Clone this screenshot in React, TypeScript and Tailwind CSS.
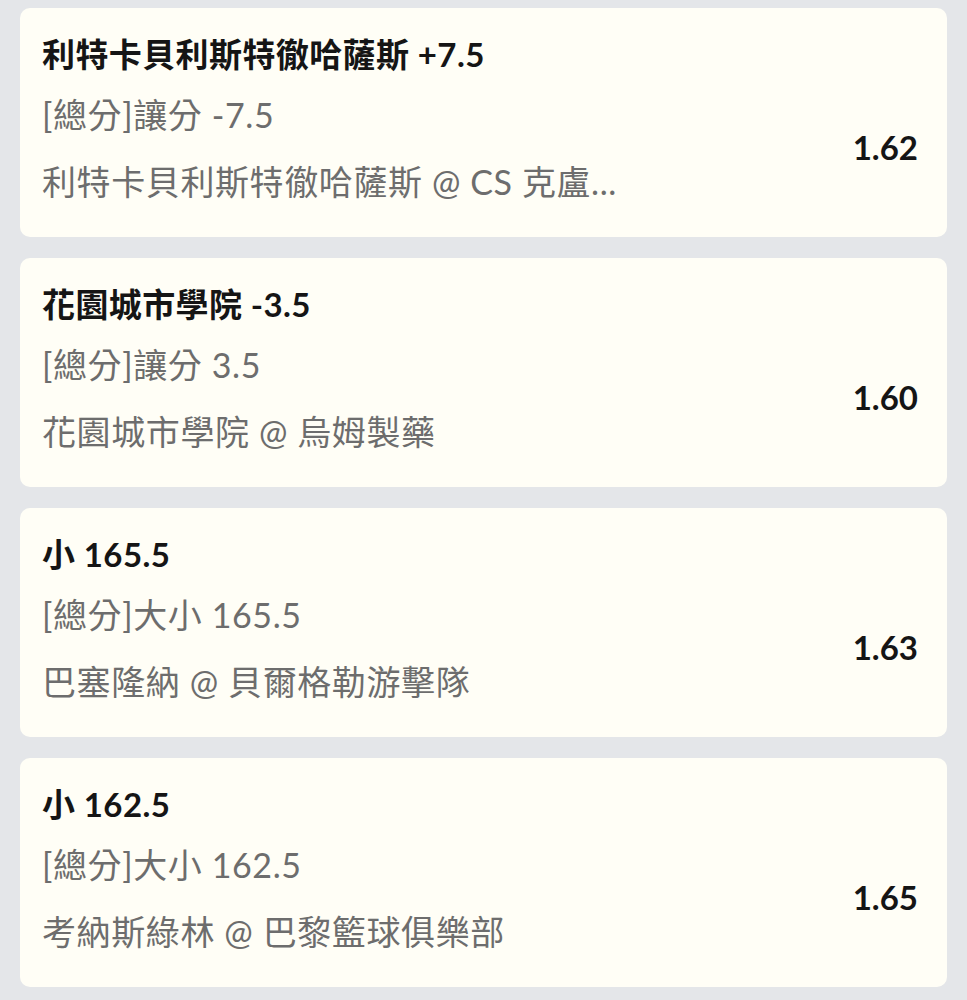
import React from "react";

type Bet = {
  pick: string;
  market: string;
  match: string;
  odds: string;
};

const bets: Bet[] = [
  {
    pick: "利特卡貝利斯特徹哈薩斯 +7.5",
    market: "[總分]讓分 -7.5",
    match: "利特卡貝利斯特徹哈薩斯 @ CS 克盧...",
    odds: "1.62",
  },
  {
    pick: "花園城市學院 -3.5",
    market: "[總分]讓分 3.5",
    match: "花園城市學院 @ 烏姆製藥",
    odds: "1.60",
  },
  {
    pick: "小 165.5",
    market: "[總分]大小 165.5",
    match: "巴塞隆納 @ 貝爾格勒游擊隊",
    odds: "1.63",
  },
  {
    pick: "小 162.5",
    market: "[總分]大小 162.5",
    match: "考納斯綠林 @ 巴黎籃球俱樂部",
    odds: "1.65",
  },
];

function BetCard({ bet }: { bet: Bet }) {
  return (
    <div className="flex h-[229px] flex-col rounded-[10px] bg-[#fffef6] pl-[22px] pr-[29px] pt-[20px]">
      <div className="whitespace-nowrap text-[33px] font-bold leading-[53px] tracking-[0.4px] text-[#151515]">
        {bet.pick}
      </div>
      <div className="flex items-center justify-between">
        <div className="whitespace-nowrap text-[34px] leading-[67px] tracking-[0.6px] text-[#6d6d6d]">
          <div>{bet.market}</div>
          <div>{bet.match}</div>
        </div>
        <div className="text-[33px] font-bold text-[#151515]">{bet.odds}</div>
      </div>
    </div>
  );
}

export default function App() {
  return (
    <div className="min-h-screen bg-[#e4e6e9] px-5 pb-[13px] pt-2 font-['Lato','Noto_Sans_CJK_TC',sans-serif]">
      <div className="flex flex-col gap-[21px]">
        {bets.map((bet) => (
          <BetCard key={bet.odds} bet={bet} />
        ))}
      </div>
    </div>
  );
}
